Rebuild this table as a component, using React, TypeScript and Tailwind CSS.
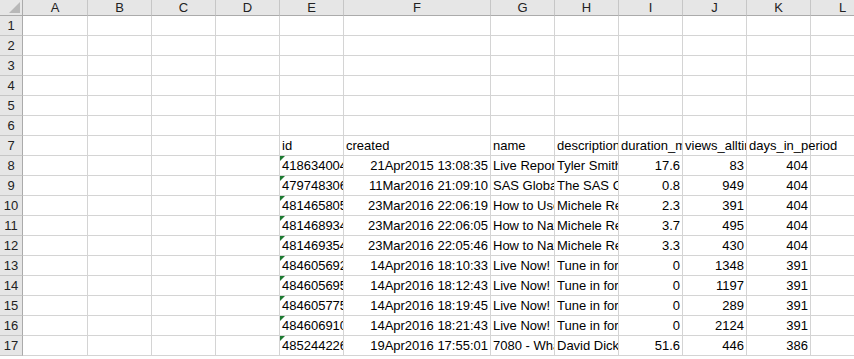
import React from "react";

const cols = [
  { l: "A", w: 65 },
  { l: "B", w: 64 },
  { l: "C", w: 64 },
  { l: "D", w: 64 },
  { l: "E", w: 64 },
  { l: "F", w: 147 },
  { l: "G", w: 64 },
  { l: "H", w: 64 },
  { l: "I", w: 64 },
  { l: "J", w: 64 },
  { l: "K", w: 64 },
  { l: "L", w: 64 },
];

type Row = [string, string, string, string, string, string, string];

const data: Row[] = [
  ["418634004001", "21Apr2015 13:08:35", "Live Report", "Tyler Smith", "17.6", "83", "404"],
  ["479748306001", "11Mar2016 21:09:10", "SAS Global", "The SAS Global", "0.8", "949", "404"],
  ["481465805001", "23Mar2016 22:06:19", "How to Use", "Michele Reister", "2.3", "391", "404"],
  ["481468934001", "23Mar2016 22:06:05", "How to Navigate", "Michele Reister", "3.7", "495", "404"],
  ["481469354001", "23Mar2016 22:05:46", "How to Navigate", "Michele Reister", "3.3", "430", "404"],
  ["484605692001", "14Apr2016 18:10:33", "Live Now! ", "Tune in for", "0", "1348", "391"],
  ["484605695001", "14Apr2016 18:12:43", "Live Now! ", "Tune in for", "0", "1197", "391"],
  ["484605775001", "14Apr2016 18:19:45", "Live Now! ", "Tune in for", "0", "289", "391"],
  ["484606910001", "14Apr2016 18:21:43", "Live Now! ", "Tune in for", "0", "2124", "391"],
  ["485244226001", "19Apr2016 17:55:01", "7080 - What", "David Dickey", "51.6", "446", "386"],
];

const font = { fontFamily: '"Liberation Sans", Arial, sans-serif' };

function Cell({
  w,
  children,
  align = "left",
  clip = true,
  tri = false,
}: {
  w: number;
  children?: React.ReactNode;
  align?: "left" | "right";
  clip?: boolean;
  tri?: boolean;
}) {
  return (
    <div
      className={`relative h-[20px] shrink-0 border-r border-b border-[#d4d4d4] bg-white ${
        clip ? "overflow-hidden" : "overflow-visible z-10"
      }`}
      style={{ width: w }}
    >
      {tri && (
        <div className="absolute left-0 top-0 h-0 w-0 border-t-[5px] border-r-[5px] border-t-[#1e7a32] border-r-transparent" />
      )}
      <div
        className={`absolute bottom-[1px] whitespace-nowrap text-[13px] leading-[16px] text-black ${
          align === "right" ? "right-[2px] text-right" : "left-[2px]"
        }`}
      >
        {children}
      </div>
    </div>
  );
}

export default function App() {
  const rows = Array.from({ length: 17 }, (_, i) => i + 1);
  return (
    <div className="h-[359px] w-[854px] overflow-hidden bg-white" style={font}>
      {/* header */}
      <div className="flex h-[16px]">
        <div className="relative h-[16px] w-[23px] shrink-0 border-r border-b border-[#ababab] bg-[#e6e6e6]">
          <div className="absolute bottom-[2px] right-[2px] h-0 w-0 border-b-[11px] border-l-[11px] border-b-[#b8b8b8] border-l-transparent" />
        </div>
        {cols.map((c) => (
          <div
            key={c.l}
            className="flex h-[16px] shrink-0 items-center justify-center border-r border-b border-r-[#c6c6c6] border-b-[#ababab] bg-[#e6e6e6] text-[13px] leading-[16px] text-[#222]"
            style={{ width: c.w }}
          >
            {c.l}
          </div>
        ))}
      </div>
      {rows.map((r) => {
        const d = r >= 8 ? data[r - 8] : null;
        return (
          <div key={r} className="flex h-[20px]">
            <div className="flex h-[20px] w-[23px] shrink-0 items-end justify-center border-r border-b border-r-[#ababab] border-b-[#c6c6c6] bg-[#e6e6e6] pb-[1px] text-[13px] leading-[16px] text-[#222]">
              {r}
            </div>
            <Cell w={65} />
            <Cell w={64} />
            <Cell w={64} />
            <Cell w={64} />
            {r === 7 ? (
              <>
                <Cell w={64}>id</Cell>
                <Cell w={147}>created</Cell>
                <Cell w={64}>name</Cell>
                <Cell w={64}>description</Cell>
                <Cell w={64}>duration_min</Cell>
                <Cell w={64}>views_alltime</Cell>
                <Cell w={64} clip={false}>days_in_period</Cell>
                <Cell w={64} />
              </>
            ) : d ? (
              <>
                <Cell w={64} tri>
                  {d[0]}
                </Cell>
                <Cell w={147} align="right">
                  {d[1]}
                </Cell>
                <Cell w={64}>{d[2]}</Cell>
                <Cell w={64}>{d[3]}</Cell>
                <Cell w={64} align="right">
                  {d[4]}
                </Cell>
                <Cell w={64} align="right">
                  {d[5]}
                </Cell>
                <Cell w={64} align="right">
                  {d[6]}
                </Cell>
                <Cell w={64} />
              </>
            ) : (
              <>
                <Cell w={64} />
                <Cell w={147} />
                <Cell w={64} />
                <Cell w={64} />
                <Cell w={64} />
                <Cell w={64} />
                <Cell w={64} />
                <Cell w={64} />
              </>
            )}
          </div>
        );
      })}
    </div>
  );
}
